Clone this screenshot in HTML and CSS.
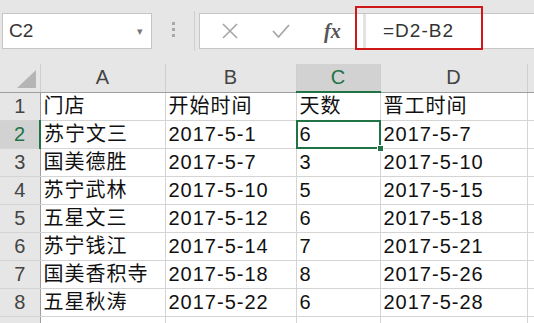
FILE: index.html
```html
<!DOCTYPE html>
<html lang="zh-CN">
<head>
  <meta charset="UTF-8">
  <title>工作表</title>
  <link rel="stylesheet" href="styles.css">
</head>
<body>

<div class="toolbar">
  <div class="name-box">
    <span>C2</span>
    <span class="caret">&#9662;</span>
  </div>
  <div class="grip"><i></i><i></i><i></i></div>
  <div class="divider"></div>
  <div class="formula">
    <div class="formula-btns">
      <svg class="btn" width="18" height="18" viewBox="0 0 18 18"><path d="M2 2 L16 16 M16 2 L2 16" stroke="#a6a6a6" stroke-width="1.6" fill="none"/></svg>
      <svg class="btn" width="20" height="18" viewBox="0 0 20 18"><path d="M2 9 L7.5 15 L18 3" stroke="#a6a6a6" stroke-width="1.8" fill="none"/></svg>
      <span class="fx">fx</span>
    </div>
    <div class="formula-text">=D2-B2</div>
  </div>
  <div class="mark"></div>
</div>

<table class="sheet">
  <colgroup>
    <col style="width:40px">
    <col style="width:125px">
    <col style="width:131px">
    <col style="width:84px">
    <col style="width:147px">
    <col style="width:40px">
  </colgroup>
  <thead>
    <tr>
      <th class="corner">
        <svg width="40" height="27" viewBox="0 0 40 27"><polygon points="36,6 36,24 17,24" fill="#b5b5b5"/></svg>
      </th>
      <th>A</th>
      <th>B</th>
      <th class="active">C</th>
      <th>D</th>
      <th></th>
    </tr>
  </thead>
  <tbody>
    <tr><th>1</th><td>门店</td><td>开始时间</td><td>天数</td><td>晋工时间</td><td></td></tr>
    <tr><th class="active">2</th><td>苏宁文三</td><td>2017-5-1</td><td class="selected">6</td><td>2017-5-7</td><td></td></tr>
    <tr><th>3</th><td>国美德胜</td><td>2017-5-7</td><td>3</td><td>2017-5-10</td><td></td></tr>
    <tr><th>4</th><td>苏宁武林</td><td>2017-5-10</td><td>5</td><td>2017-5-15</td><td></td></tr>
    <tr><th>5</th><td>五星文三</td><td>2017-5-12</td><td>6</td><td>2017-5-18</td><td></td></tr>
    <tr><th>6</th><td>苏宁钱江</td><td>2017-5-14</td><td>7</td><td>2017-5-21</td><td></td></tr>
    <tr><th>7</th><td>国美香积寺</td><td>2017-5-18</td><td>8</td><td>2017-5-26</td><td></td></tr>
    <tr><th>8</th><td>五星秋涛</td><td>2017-5-22</td><td>6</td><td>2017-5-28</td><td></td></tr>
    <tr><th></th><td></td><td></td><td></td><td></td><td></td></tr>
  </tbody>
</table>

</body>
</html>
```

FILE: styles.css
```css
body {
  margin: 0;
  width: 534px;
  height: 323px;
  overflow: hidden;
  background: #e6e6e6;
  font-family: "Liberation Sans", "Noto Sans CJK SC", sans-serif;
}

.toolbar {
  position: relative;
  display: flex;
  align-items: flex-start;
  height: 64px;
  padding-top: 13px;
  box-sizing: border-box;
}

.name-box {
  display: flex;
  align-items: center;
  justify-content: space-between;
  margin-left: 2px;
  width: 150px;
  height: 36px;
  box-sizing: border-box;
  padding: 0 8px 0 6px;
  background: #fff;
  border: 1px solid #c6c6c6;
  font-size: 19px;
  color: #333;
}

.caret {
  font-size: 11px;
  color: #777;
}

.grip {
  display: flex;
  flex-direction: column;
  gap: 3px;
  margin: 9px 0 0 20px;
}

.grip i {
  width: 3px;
  height: 3px;
  background: #a8a8a8;
}

.divider {
  width: 1px;
  height: 40px;
  margin: -2px 0 0 19px;
  background: #cfcfcf;
}

.formula {
  display: flex;
  flex: 1;
  height: 36px;
  margin-left: 4px;
  box-sizing: border-box;
  border: 1px solid #c6c6c6;
  border-right: none;
  background: #fff;
}

.formula-btns {
  display: flex;
  align-items: center;
  width: 163px;
  border-right: 3px solid #e3e3e3;
}

.btn {
  margin-left: 21px;
}

.btn + .btn {
  margin-left: 32px;
}

.fx {
  margin-left: 33px;
  font-family: "Liberation Serif", serif;
  font-style: italic;
  font-weight: bold;
  font-size: 20px;
  color: #555;
}

.formula-text {
  padding-left: 17px;
  line-height: 34px;
  font-size: 19px;
  letter-spacing: 1px;
  color: #333;
}

.mark {
  position: absolute;
  left: 355px;
  top: 6px;
  width: 128px;
  height: 44px;
  box-sizing: border-box;
  border: 2px solid #d01818;
}

.sheet {
  table-layout: fixed;
  border-collapse: collapse;
  width: 567px;
  background: #fff;
}

.sheet tr {
  height: 28px;
}

.sheet th,
.sheet td {
  padding: 0;
  height: 27px;
  line-height: 27px;
  font-size: 20px;
  font-weight: normal;
  white-space: nowrap;
  overflow: hidden;
}

.sheet thead th {
  background: #e6e6e6;
  color: #444;
  border-left: 1px solid #cfcfcf;
  border-bottom: 1px solid #9e9e9e;
  text-align: center;
}

.sheet thead th.corner {
  border-left: none;
  line-height: 0;
}

.sheet tbody th {
  background: #e6e6e6;
  color: #444;
  border-right: 1px solid #9e9e9e;
  border-bottom: 1px solid #d4d4d4;
  text-align: center;
}

.sheet td {
  border: 1px solid #d4d4d4;
  padding-left: 3px;
  letter-spacing: 1px;
  color: #111;
}

.sheet thead th.active {
  background: #d2d2d2;
  color: #217346;
  border-bottom: 2px solid #217346;
}

.sheet tbody th.active {
  background: #d2d2d2;
  color: #217346;
  border-right: 2px solid #217346;
}

.sheet td.selected {
  position: relative;
  overflow: visible;
}

.sheet td.selected::before {
  content: "";
  position: absolute;
  left: -1px;
  top: -1px;
  right: -1px;
  bottom: -1px;
  border: 2px solid #217346;
}

.sheet td.selected::after {
  content: "";
  position: absolute;
  right: -4px;
  bottom: -4px;
  width: 5px;
  height: 5px;
  background: #217346;
  border: 1px solid #fff;
}
```
